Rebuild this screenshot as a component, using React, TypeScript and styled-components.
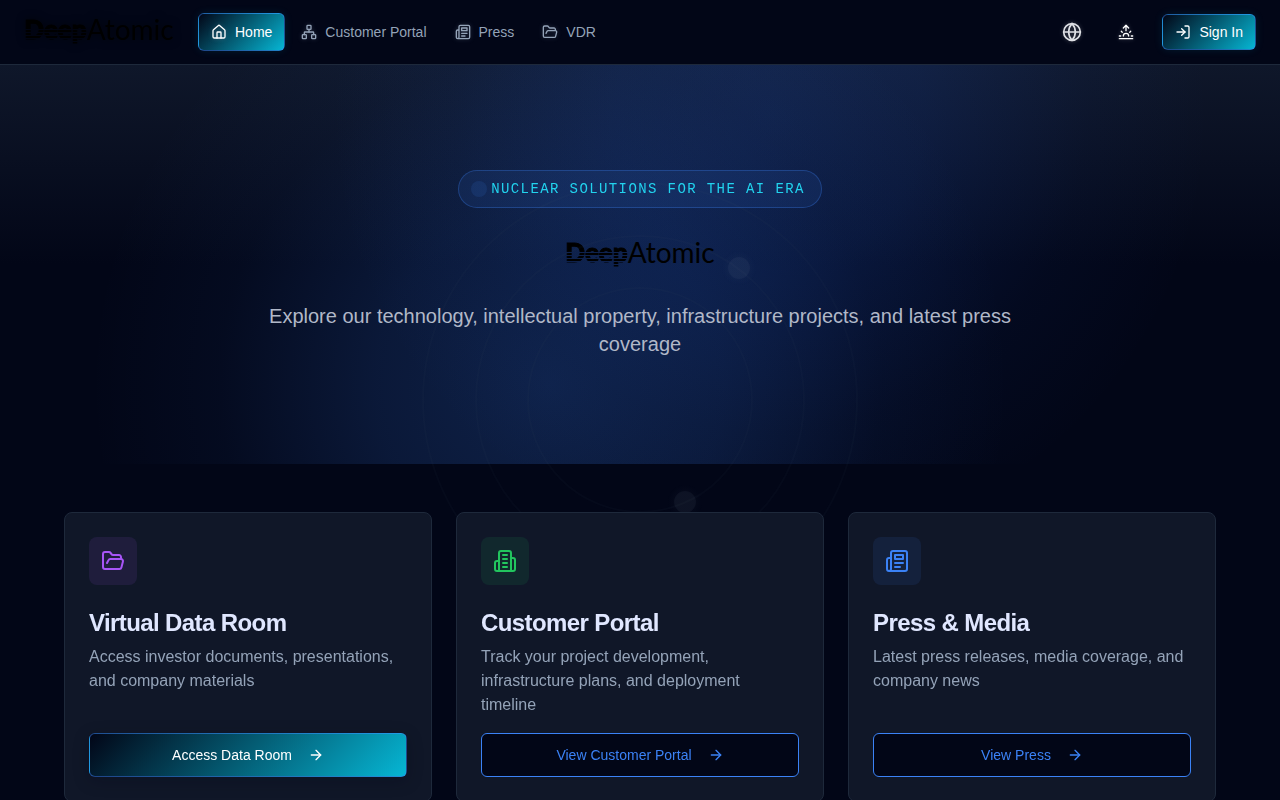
import React from 'react';
import styled, { createGlobalStyle, css } from 'styled-components';
import { ArrowRight, FolderOpen, Globe, House, LogIn, Network, Sunrise } from 'lucide-react';

const GlobalStyle = createGlobalStyle`
  *, *::before, *::after { box-sizing: border-box; }
  body {
    margin: 0;
    min-height: 100vh;
    background: #020617;
    color: #e0e7ff;
    font-family: 'Liberation Sans', Arial, sans-serif;
    font-size: 16px;
    line-height: 24px;
  }
  h2, p { margin: 0; }
  a { color: inherit; text-decoration: none; }
  button { font: inherit; cursor: pointer; }
`;

const Page = styled.div`
  position: relative;
  isolation: isolate;
`;

const Orbits = styled.svg`
  position: fixed;
  inset: 0;
  margin: auto;
  width: 480px;
  height: 480px;
  z-index: 0;
  pointer-events: none;
`;

const Header = styled.header`
  position: sticky;
  top: 0;
  z-index: 3;
  display: flex;
  align-items: center;
  justify-content: space-between;
  height: 65px;
  padding: 0 24px;
  background: #020617;
  border-bottom: 1px solid #1e293b;
`;

const HeaderSide = styled.div<{ $gap: number }>`
  display: flex;
  align-items: center;
  gap: ${(p) => p.$gap}px;
`;

const Nav = styled.nav`
  display: flex;
  align-items: center;
  gap: 4px;
`;

const LogoMark = styled.div<{ $glow?: boolean }>`
  display: flex;
  align-items: flex-start;
  justify-content: center;
  width: 150px;
  height: 30px;
  color: #000;
  font-family: Lato, sans-serif;
  font-size: 28px;
  line-height: 24px;
  white-space: nowrap;
  ${(p) => p.$glow && css`filter: drop-shadow(0 0 4px rgba(0, 0, 0, 0.6));`}
`;

const LogoDeep = styled.span`
  padding-bottom: 8px;
  font-size: 26px;
  font-weight: 900;
  -webkit-text-stroke: 1px #000;
  mask-image:
    linear-gradient(#000 12px, transparent 12px),
    repeating-linear-gradient(transparent 0 1px, #000 1px 3px);
`;

const LogoAtomic = styled.span`
  font-weight: 400;
`;

const gradientFill = css`
  color: #fff;
  background-image: linear-gradient(135deg, #020617, #06b6d4);
  border: 1px solid rgba(59, 130, 246, 0.5);
`;

const NavLink = styled.a<{ $active?: boolean }>`
  display: flex;
  align-items: center;
  gap: 8px;
  height: 38px;
  padding: 0 12px;
  border-radius: 6px;
  color: #94a3b8;
  font-size: 14px;
  line-height: 20px;
  svg { filter: drop-shadow(0 0 2px rgba(148, 163, 184, 0.3)); }
  ${(p) => p.$active && css`
    ${gradientFill}
    box-shadow: 0 0 8px rgba(6, 182, 212, 0.12);
  `}
`;

const IconButton = styled.button`
  display: grid;
  place-items: center;
  width: 36px;
  height: 36px;
  padding: 0;
  border: 0;
  background: none;
  color: #dfe1e6;
  svg { filter: drop-shadow(0 0 2px rgba(255, 255, 255, 0.25)); }
`;

const SignIn = styled.button`
  ${gradientFill}
  display: flex;
  align-items: center;
  gap: 8px;
  height: 36px;
  padding: 0 12px;
  border-radius: 6px;
  font-size: 14px;
  line-height: 20px;
  box-shadow: 0 0 8px rgba(6, 182, 212, 0.12);
`;

const Hero = styled.section`
  position: relative;
  display: flex;
  flex-direction: column;
  align-items: center;
  gap: 32px;
  padding: 105px 24px 106px;
  background:
    radial-gradient(circle 440px at calc(50% + 130px) 50px, rgba(37, 99, 235, 0.18), rgba(37, 99, 235, 0.14) 35%, rgba(37, 99, 235, 0.04) 72%, transparent),
    radial-gradient(circle 460px at calc(50% - 90px) 320px, rgba(59, 130, 246, 0.22), rgba(59, 130, 246, 0.15) 38%, rgba(59, 130, 246, 0.04) 72%, transparent),
    linear-gradient(#0f172a, #020617 50%);
`;

const Pill = styled.div`
  position: relative;
  z-index: 1;
  display: flex;
  align-items: center;
  gap: 4px;
  padding: 8px 16px 8px 12px;
  border: 1px solid rgba(59, 130, 246, 0.3);
  border-radius: 19px;
  background: rgba(59, 130, 246, 0.1);
  color: #22d3ee;
  font-family: 'Liberation Mono', monospace;
  font-size: 14px;
  line-height: 20px;
  letter-spacing: 0.1em;
  text-transform: uppercase;
`;

const PillDot = styled.span`
  width: 16px;
  height: 16px;
  border-radius: 50%;
  background: rgba(59, 130, 246, 0.12);
`;

const Lead = styled.p`
  max-width: 768px;
  color: #b1b8c8;
  font-size: 20px;
  line-height: 28px;
  text-align: center;
`;

const Cards = styled.section`
  position: relative;
  z-index: 1;
  display: grid;
  grid-template-columns: repeat(auto-fit, minmax(300px, 1fr));
  gap: 24px;
  max-width: 1280px;
  margin: 0 auto;
  padding: 48px 64px;
`;

const Card = styled.article`
  display: flex;
  flex-direction: column;
  padding: 24px;
  border: 1px solid #1e293b;
  border-radius: 8px;
  background: #101728;
`;

const tones = {
  purple: ['#a855f7', 'rgba(168, 85, 247, 0.1)'],
  green: ['#22c55e', 'rgba(34, 197, 94, 0.1)'],
  blue: ['#3b82f6', 'rgba(59, 130, 246, 0.1)'],
};

const IconTile = styled.div<{ $tone: keyof typeof tones }>`
  display: grid;
  place-items: center;
  width: 48px;
  height: 48px;
  margin-bottom: 22px;
  border-radius: 8px;
  color: ${(p) => tones[p.$tone][0]};
  background: ${(p) => tones[p.$tone][1]};
`;

const CardTitle = styled.h2`
  margin-bottom: 6px;
  color: #e0e7ff;
  font-size: 24px;
  line-height: 32px;
  letter-spacing: -0.025em;
`;

const CardText = styled.p`
  flex: 1;
  margin-bottom: 16px;
  color: #94a3b8;
`;

const CardButton = styled.button<{ $filled?: boolean }>`
  display: flex;
  align-items: center;
  justify-content: center;
  gap: 16px;
  height: 44px;
  border: 1px solid #3b82f6;
  border-radius: 6px;
  background-color: #020617;
  color: #3b82f6;
  font-size: 14px;
  line-height: 20px;
  ${(p) => p.$filled && css`
    ${gradientFill}
    box-shadow: 0 4px 16px rgba(2, 6, 23, 0.25);
  `}
`;

function Logo({ glow }: { glow?: boolean }) {
  return (
    <LogoMark $glow={glow}>
      <LogoDeep>Deep</LogoDeep>
      <LogoAtomic>Atomic</LogoAtomic>
    </LogoMark>
  );
}

function StrokeIcon({ size = 24, children }: { size?: number; children: React.ReactNode }) {
  return (
    <svg width={size} height={size} viewBox="0 0 24 24" fill="none" stroke="currentColor" strokeWidth="2" strokeLinecap="round" strokeLinejoin="round" aria-hidden="true">
      {children}
    </svg>
  );
}

function BuildingIcon({ size }: { size?: number }) {
  return (
    <StrokeIcon size={size}>
      <path d="M6 22V4a2 2 0 0 1 2-2h8a2 2 0 0 1 2 2v18Z" />
      <path d="M6 12H4a2 2 0 0 0-2 2v6a2 2 0 0 0 2 2h2" />
      <path d="M18 9h2a2 2 0 0 1 2 2v9a2 2 0 0 1-2 2h-2" />
      <path d="M10 6h4M10 10h4M10 14h4M10 18h4" />
    </StrokeIcon>
  );
}

function NewsIcon({ size }: { size?: number }) {
  return (
    <StrokeIcon size={size}>
      <path d="M4 22h16a2 2 0 0 0 2-2V4a2 2 0 0 0-2-2H8a2 2 0 0 0-2 2v16a2 2 0 0 1-2 2Zm0 0a2 2 0 0 1-2-2v-9c0-1.1.9-2 2-2h2" />
      <path d="M18 14h-8M15 18h-5" />
      <path d="M10 6h8v4h-8V6Z" />
    </StrokeIcon>
  );
}

const links = [
  { label: 'Home', icon: House },
  { label: 'Customer Portal', icon: Network },
  { label: 'Press', icon: NewsIcon },
  { label: 'VDR', icon: FolderOpen },
];

const cards = [
  {
    tone: 'purple' as const,
    icon: <FolderOpen size={24} />,
    title: 'Virtual Data Room',
    text: 'Access investor documents, presentations, and company materials',
    action: 'Access Data Room',
  },
  {
    tone: 'green' as const,
    icon: <BuildingIcon />,
    title: 'Customer Portal',
    text: 'Track your project development, infrastructure plans, and deployment timeline',
    action: 'View Customer Portal',
  },
  {
    tone: 'blue' as const,
    icon: <NewsIcon />,
    title: 'Press & Media',
    text: 'Latest press releases, media coverage, and company news',
    action: 'View Press',
  },
];

export default function App() {
  return (
    <Page>
      <GlobalStyle />
      <Header>
        <HeaderSide $gap={24}>
          <Logo glow />
          <Nav>
            {links.map(({ label, icon: Icon }, i) => (
              <NavLink key={label} href="#" $active={i === 0}>
                <Icon size={16} />
                {label}
              </NavLink>
            ))}
          </Nav>
        </HeaderSide>
        <HeaderSide $gap={18}>
          <IconButton aria-label="Language"><Globe size={20} /></IconButton>
          <IconButton aria-label="Theme"><Sunrise size={16} color="#fff" /></IconButton>
          <SignIn><LogIn size={16} />Sign In</SignIn>
        </HeaderSide>
      </Header>
      <main>
        <Hero>
          <Pill><PillDot />Nuclear Solutions for the AI Era</Pill>
          <Logo />
          <Lead>Explore our technology, intellectual property, infrastructure projects, and latest press coverage</Lead>
        </Hero>
        <Orbits viewBox="-240 -240 480 480" aria-hidden="true">
          <defs>
            <radialGradient id="halo">
              <stop offset="0.5" stopColor="#94a3b8" stopOpacity="0.03" />
              <stop offset="1" stopColor="#94a3b8" stopOpacity="0" />
            </radialGradient>
          </defs>
          <g fill="none" stroke="#475569" strokeOpacity="0.06" strokeWidth="2">
            <circle r="112" />
            <circle r="164" />
            <circle r="217" />
          </g>
          <g fill="url(#halo)">
            <circle cx="45" cy="102" r="18" />
            <circle cx="99" cy="-132" r="18" />
          </g>
          <g fill="#94a3b8" fillOpacity="0.06">
            <circle cx="45" cy="102" r="11" />
            <circle cx="99" cy="-132" r="11" />
          </g>
        </Orbits>
        <Cards>
          {cards.map((card) => (
            <Card key={card.title}>
              <IconTile $tone={card.tone}>{card.icon}</IconTile>
              <CardTitle>{card.title}</CardTitle>
              <CardText>{card.text}</CardText>
              <CardButton $filled={card.tone === 'purple'}>
                {card.action}
                <ArrowRight size={16} />
              </CardButton>
            </Card>
          ))}
        </Cards>
      </main>
    </Page>
  );
}
